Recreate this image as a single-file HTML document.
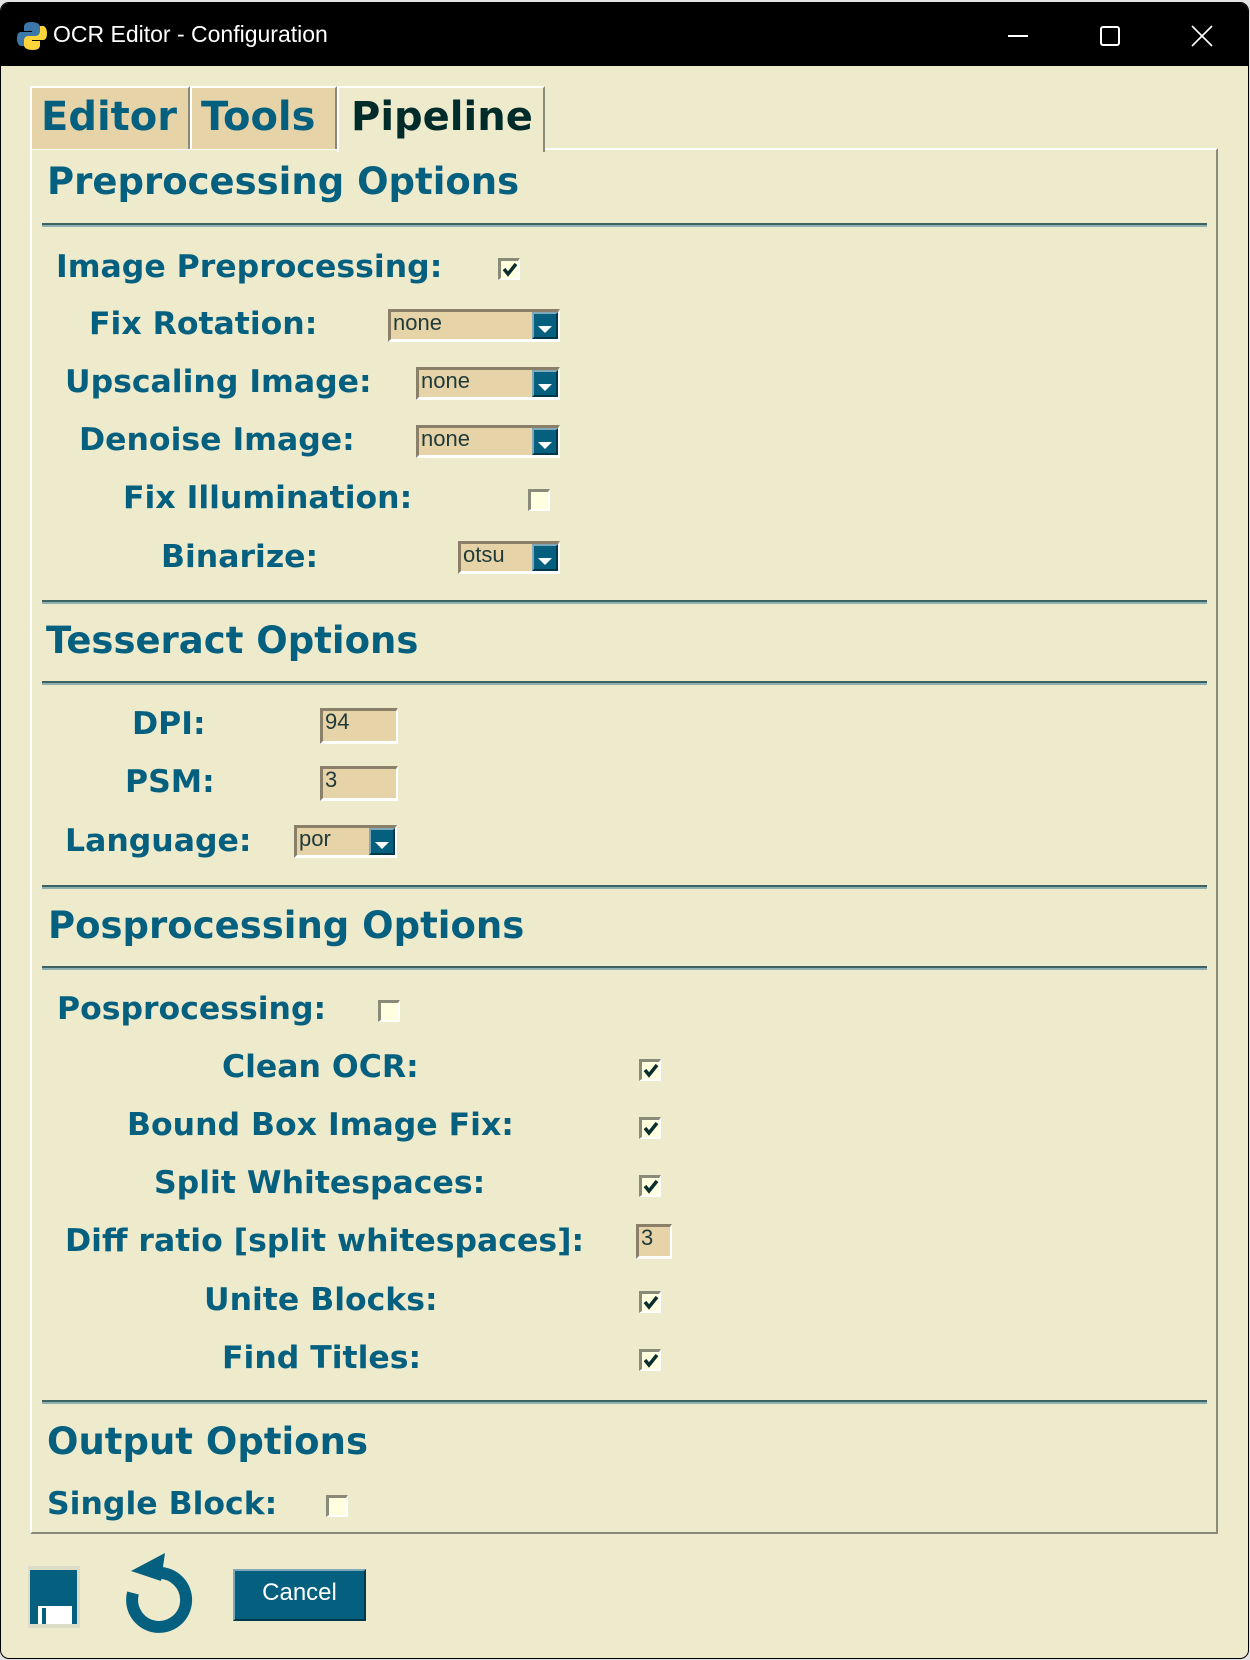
<!DOCTYPE html>
<html><head><meta charset="utf-8">
<style>
*{margin:0;padding:0;box-sizing:border-box}
html,body{width:1250px;height:1660px;overflow:hidden;background:#e3e3e3}
.win{position:absolute;left:0;top:2px;width:1249px;height:1657px;background:#eeeacc;border:1px solid #000;border-radius:9px;overflow:hidden}
.tb{position:absolute;left:0;top:0;width:100%;height:63px;background:#000}
.title{position:absolute;left:52px;top:18px;color:#fff;font:23px "Liberation Sans",sans-serif}
.t{position:absolute;font-family:"DejaVu Sans",sans-serif;font-weight:bold;color:#05607f;white-space:nowrap}
.lab{font-size:31.5px;line-height:38px;margin-top:-2px}
.sec{font-size:37px;line-height:44px;margin-top:-1px}
.tab{position:absolute;top:83px;height:63px;background:#e6d3a8;border-top:2px solid #fff;border-left:2px solid #fff;border-right:2px solid #8a8a78;font:bold 40px "DejaVu Sans",sans-serif;color:#05607f;padding-left:9px;line-height:58px}
.panel{position:absolute;left:29px;top:145px;width:1188px;height:1386px;border-top:2px solid #fff;border-left:2px solid #fff;border-right:2px solid #8a8a78;border-bottom:2px solid #8a8a78}
.hr{position:absolute;left:41px;width:1165px;height:4px;border-top:2px solid #3d6262;border-bottom:2px solid #8fb0b0}
.cb{position:absolute;width:22px;height:22px;background:#ffffe0;border-top:3px solid #8a8a78;border-left:3px solid #8a8a78;border-right:2px solid #fff;border-bottom:2px solid #fff}
.cb svg{position:absolute;left:1px;top:2px}
.cmb{position:absolute;background:#e6d3a8;border-top:3px solid #8a7f68;border-left:3px solid #8a7f68;border-bottom:3px solid #fff;border-right:2px solid #fff;font:22px "Liberation Sans",sans-serif;color:#1f3a3a;padding-left:2px;line-height:22px}
.btn{position:absolute;right:0;top:0;bottom:0;width:26px;background:#05607f;border-top:2px solid #7fa9b8;border-left:2px solid #7fa9b8;border-right:2px solid #02384a;border-bottom:2px solid #02384a}
.btn:after{content:"";position:absolute;left:4px;top:12px;border-left:7px solid transparent;border-right:7px solid transparent;border-top:7px solid #fff}
</style></head><body>
<div class="win">
<div class="tb">
<svg style="position:absolute;left:15px;top:17px" width="32" height="32" viewBox="0 0 32 32"><path d="M15 2c-5 0-7 2-7 5v4h8v1H5c-3 0-4 3-4 7s2 7 4 7h3v-5c0-3 2-5 5-5h7c2 0 4-2 4-4V7c0-3-3-5-9-5z" fill="#3b77a8"/><path d="M17 30c5 0 7-2 7-5v-4h-8v-1h11c3 0 4-3 4-7s-2-7-4-7h-3v5c0 3-2 5-5 5h-7c-2 0-4 2-4 4v5c0 3 3 5 9 5z" fill="#ffd43b"/></svg>
<div class="title">OCR Editor - Configuration</div>
<div style="position:absolute;left:1007px;top:32px;width:20px;height:2px;background:#fff"></div>
<div style="position:absolute;left:1099px;top:23px;width:20px;height:20px;border:2px solid #fff;border-radius:3px"></div>
<svg style="position:absolute;left:1190px;top:22px" width="22" height="22"><path d="M1 1L21 21M21 1L1 21" stroke="#fff" stroke-width="1.6"/></svg>
</div>
<div class="panel"></div>
<div class="tab" style="left:29px;width:160px">Editor</div>
<div class="tab" style="left:189px;width:147px">Tools</div>
<div class="tab" style="left:336px;width:208px;height:66px;background:#eeeacc;color:#002b2b;padding-left:12px">Pipeline</div>

<div class="t sec" style="left:46px;top:158px">Preprocessing Options</div>
<div class="hr" style="top:220px"></div>
<div class="t lab" style="left:55px;top:247px">Image Preprocessing:</div>
<div class="cb" style="left:497px;top:255px"><svg width="16" height="14"><path d="M2 6l4 5 8-10" stroke="#0a2e2e" stroke-width="3.5" fill="none"/></svg></div>
<div class="t lab" style="left:88px;top:304px">Fix Rotation:</div>
<div class="cmb" style="left:387px;top:306px;width:172px;height:33px">none<div class="btn"></div></div>
<div class="t lab" style="left:64px;top:362px">Upscaling Image:</div>
<div class="cmb" style="left:415px;top:364px;width:144px;height:33px">none<div class="btn"></div></div>
<div class="t lab" style="left:78px;top:420px">Denoise Image:</div>
<div class="cmb" style="left:415px;top:422px;width:144px;height:33px">none<div class="btn"></div></div>
<div class="t lab" style="left:122px;top:478px">Fix Illumination:</div>
<div class="cb" style="left:527px;top:486px"></div>
<div class="t lab" style="left:160px;top:537px">Binarize:</div>
<div class="cmb" style="left:457px;top:538px;width:102px;height:33px">otsu<div class="btn"></div></div>
<div class="hr" style="top:597px"></div>

<div class="t sec" style="left:45px;top:617px">Tesseract Options</div>
<div class="hr" style="top:678px"></div>
<div class="t lab" style="left:131px;top:704px">DPI:</div>
<div class="cmb" style="left:319px;top:705px;width:78px;height:36px">94</div>
<div class="t lab" style="left:124px;top:762px">PSM:</div>
<div class="cmb" style="left:319px;top:763px;width:78px;height:35px">3</div>
<div class="t lab" style="left:64px;top:821px">Language:</div>
<div class="cmb" style="left:293px;top:822px;width:103px;height:33px">por<div class="btn"></div></div>
<div class="hr" style="top:882px"></div>

<div class="t sec" style="left:47px;top:902px">Posprocessing Options</div>
<div class="hr" style="top:963px"></div>
<div class="t lab" style="left:56px;top:989px">Posprocessing:</div>
<div class="cb" style="left:377px;top:997px"></div>
<div class="t lab" style="left:221px;top:1047px">Clean OCR:</div>
<div class="cb" style="left:638px;top:1056px"><svg width="16" height="14"><path d="M2 6l4 5 8-10" stroke="#0a2e2e" stroke-width="3.5" fill="none"/></svg></div>
<div class="t lab" style="left:126px;top:1105px">Bound Box Image Fix:</div>
<div class="cb" style="left:638px;top:1114px"><svg width="16" height="14"><path d="M2 6l4 5 8-10" stroke="#0a2e2e" stroke-width="3.5" fill="none"/></svg></div>
<div class="t lab" style="left:153px;top:1163px">Split Whitespaces:</div>
<div class="cb" style="left:638px;top:1172px"><svg width="16" height="14"><path d="M2 6l4 5 8-10" stroke="#0a2e2e" stroke-width="3.5" fill="none"/></svg></div>
<div class="t lab" style="left:64px;top:1221px">Diff ratio [split whitespaces]:</div>
<div class="cmb" style="left:635px;top:1221px;width:36px;height:35px">3</div>
<div class="t lab" style="left:203px;top:1280px">Unite Blocks:</div>
<div class="cb" style="left:638px;top:1288px"><svg width="16" height="14"><path d="M2 6l4 5 8-10" stroke="#0a2e2e" stroke-width="3.5" fill="none"/></svg></div>
<div class="t lab" style="left:221px;top:1338px">Find Titles:</div>
<div class="cb" style="left:638px;top:1346px"><svg width="16" height="14"><path d="M2 6l4 5 8-10" stroke="#0a2e2e" stroke-width="3.5" fill="none"/></svg></div>
<div class="hr" style="top:1397px"></div>

<div class="t sec" style="left:46px;top:1418px">Output Options</div>
<div class="t lab" style="left:46px;top:1484px">Single Block:</div>
<div class="cb" style="left:325px;top:1492px"></div>

<svg style="position:absolute;left:27px;top:1563px" width="52" height="62" viewBox="0 0 52 62"><rect x="0" y="0" width="52" height="62" fill="#dcdcc8"/><rect x="2" y="4" width="47" height="54" fill="#05607f"/><rect x="10" y="40" width="34" height="18" fill="#fff"/><rect x="14" y="42" width="4" height="16" fill="#05607f"/></svg>
<svg style="position:absolute;left:120px;top:1550px" width="80" height="82" viewBox="0 0 80 82"><path d="M12 40 A27 27 0 1 0 36 20" stroke="#05607f" stroke-width="12" fill="none"/><path d="M10 18 L44 0 L40 28 Z" fill="#05607f"/></svg>
<div style="position:absolute;left:232px;top:1566px;width:133px;height:52px;background:#05607f;border-top:2px solid #7fa9b8;border-left:2px solid #7fa9b8;border-right:2px solid #02384a;border-bottom:2px solid #02384a;color:#fff;font:24px 'Liberation Sans',sans-serif;text-align:center;line-height:44px">Cancel</div>
</div>
</body></html>
